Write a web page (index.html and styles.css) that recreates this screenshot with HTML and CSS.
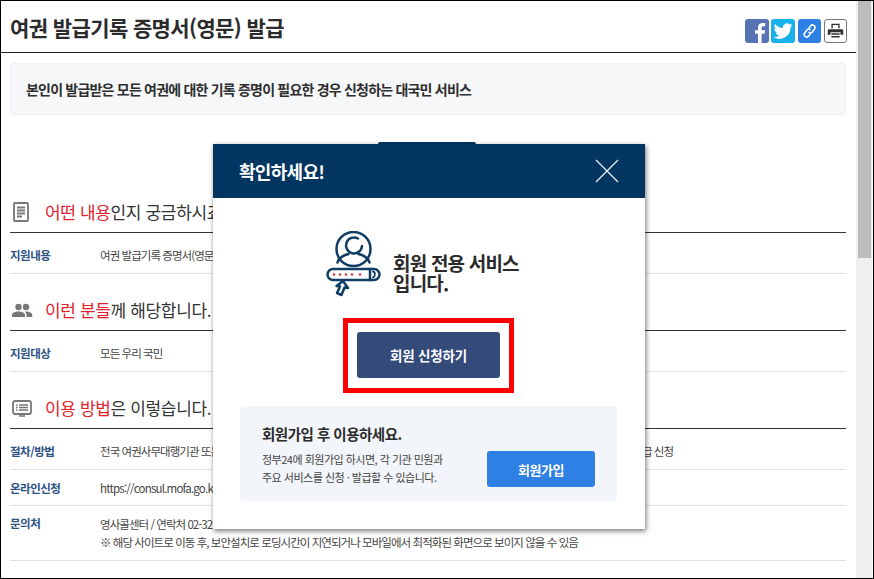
FILE: index.html
```html
<!DOCTYPE html>
<html lang="ko">
<head>
<meta charset="utf-8">
<title>여권 발급기록 증명서(영문) 발급</title>
<link rel="stylesheet" href="styles.css">
</head>
<body>
<div class="frame">
  <main class="page">
    <header class="top">
      <h1 class="title">여권 발급기록 증명서(영문) 발급</h1>
      <div class="share">
        <span class="sq fb"><svg viewBox="0 0 24 24" width="24" height="24"><path fill="#fff" d="M16.600 24v-9.200h3l.5-3.600h-3.500V9.100c0-1.100.4-1.800 1.900-1.800h1.700V4.100c-.6-.1-1.600-.2-2.700-.2-2.700 0-4.500 1.600-4.500 4.600v2.700h-3v3.600h3V24z"/></svg></span>
        <span class="sq tw"><svg viewBox="0 0 24 24" width="24" height="24"><path fill="#fff" d="M21.500 6.200c-.7.3-1.500.5-2.200.6.800-.5 1.400-1.200 1.700-2.100-.8.4-1.600.8-2.400.9a3.900 3.900 0 0 0-6.600 3.500C8.700 8.900 5.800 7.300 3.900 5c-1 1.800-.5 4 1.200 5.200-.6 0-1.200-.2-1.800-.5 0 1.900 1.400 3.500 3.200 3.900-.6.1-1.200.2-1.800.1.500 1.600 2 2.700 3.700 2.700A7.900 7.900 0 0 1 2.500 18a11 11 0 0 0 17-9.800c.8-.5 1.500-1.200 2-2z"/></svg></span>
        <span class="sq ln"><svg viewBox="0 0 23 24" width="23" height="24" fill="none" stroke="#fff" stroke-width="1.500" stroke-linecap="round"><path d="M10.800 9.400l1.500-2.200c1-1.300 2.600-1.500 3.700-.7s1.300 2.400.4 3.700l-1.900 2.600c-1 1.200-2.500 1.400-3.500.6"/><path d="M12.400 14.600l-1.500 2.200c-1 1.300-2.600 1.500-3.700.7s-1.300-2.400-.4-3.700l1.900-2.600c1-1.200 2.500-1.400 3.500-.6"/></svg></span>
        <span class="sq pr"><svg viewBox="0 0 23 24" width="21" height="22" fill="#2f2f2f"><path d="M7 4h9v5h-1.500V5.500h-6V9H7z"/><path d="M4.500 10h14a1.500 1.500 0 0 1 1.500 1.500V16h-3v-2.500H6V16H3v-4.500A1.500 1.500 0 0 1 4.500 10z"/><path d="M7 17.500h9v1.500H7zM7 14.500h9v1.500H7z"/></svg></span>
      </div>
    </header>

    <p class="notice">본인이 발급받은 모든 여권에 대한 기록 증명이 필요한 경우 신청하는 대국민 서비스</p>

    <section class="sec first">
      <h2 class="sec-head">
        <svg class="sec-icon" viewBox="0 -2 35 20" width="35" height="20" fill="none" stroke="#777" stroke-width="1.800"><rect x="4" y="-1" width="14" height="18" rx="1"/><path d="M7 3.500h8M7 6.500h8M7 9.500h8M7 12.500h5"/></svg>
        <span><em class="red">어떤 내용</em>인지 궁금하시죠?</span>
      </h2>
      <div class="row"><div class="lab">지원내용</div><div class="val">여권 발급기록 증명서(영문) 발급</div></div>
    </section>

    <section class="sec">
      <h2 class="sec-head">
        <svg class="sec-icon" viewBox="0 -1 35 20" width="35" height="20" fill="#777"><circle cx="8.500" cy="6" r="3.200"/><circle cx="16" cy="6" r="3.200"/><path d="M2 16v-2c0-2 3-3.500 6.500-3.500S15 12 15 14v2zM16.500 16v-2c0-1.300-.6-2.400-1.600-3.300.4-.1.800-.2 1.300-.2 3 0 6 1.500 6 3.500v2z"/></svg>
        <span><em class="red">이런 분들</em>께 해당합니다.</span>
      </h2>
      <div class="row"><div class="lab">지원대상</div><div class="val">모든 우리 국민</div></div>
    </section>

    <section class="sec">
      <h2 class="sec-head">
        <svg class="sec-icon" viewBox="0 -1 35 20" width="35" height="20" fill="none" stroke="#777" stroke-width="1.800"><rect x="3" y="2" width="18" height="13" rx="2"/><path d="M6 6h1.500M9 6h9M6 8.500h1.500M9 8.500h9M6 11h1.500M9 11h9" stroke-width="1.300"/><path d="M9 17h6" stroke-width="1.500"/></svg>
        <span><em class="red">이용 방법</em>은 이렇습니다.</span>
      </h2>
      <div class="row"><div class="lab">절차/방법</div><div class="val">전국 여권사무대행기관 또는 재외공관 방문 신청 또는 온라인 영사민원24를 통해 여권 발급기록 증명서(영문)온라인 또는 우편 발급 신청</div></div>
      <div class="row short"><div class="lab">온라인신청</div><div class="val url">https://consul.mofa.go.kr</div></div>
      <div class="row tall">
        <div class="lab">문의처</div>
        <div class="val">영사콜센터 / 연락처 02-3210-0404<br>※ 해당 사이트로 이동 후, 보안설치로 로딩시간이 지연되거나 모바일에서 최적화된 화면으로 보이지 않을 수 있음</div>
      </div>
    </section>
  </main>

  <div class="scrollbar"><div class="thumb"></div></div>

  <div class="tab-behind"></div>
  <div class="modal">
    <div class="modal-head">
      <span class="modal-title">확인하세요!</span>
      <svg class="close" viewBox="0 0 24 24" width="24" height="24" stroke="#e8eef3" stroke-width="1.300"><path d="M1 1l22 22M23 1L1 23"/></svg>
    </div>
    <div class="modal-body">
      <div class="intro">
        <svg class="member-icon" viewBox="0 0 56 66" width="56" height="66" fill="none" stroke="#0f3d63" stroke-width="2.500" stroke-linecap="round" stroke-linejoin="round">
          <circle cx="27.500" cy="18" r="17"/>
          <path d="M32 7.500a8 8 0 1 0 4 7.500"/>
          <path d="M22.500 23c-6 1.500-10 5-11 8.500M32.500 23c6 1.500 10 5 11 8.500"/>
          <rect x="1.500" y="38" width="52" height="11" rx="5.500"/>
          <path d="M44 38v11"/>
          <path d="M47 40.500c2.500.5 2.500 5 0 6" stroke-width="1.800"/>
          <path d="M17 50l5 7-3.500-.5-3 7.500-4.500-2 3-6.500-3.500-.5z" fill="#fff"/>
          <g fill="#d8384a" stroke="none"><circle cx="8" cy="43.500" r="1.300"/><circle cx="14" cy="43.500" r="1.300"/><circle cx="20" cy="43.500" r="1.300"/><circle cx="26" cy="43.500" r="1.300"/><circle cx="34" cy="43.500" r="1.300"/></g>
        </svg>
        <p class="intro-text">회원 전용 서비스<br>입니다.</p>
      </div>
      <div class="mark"><a class="apply">회원 신청하기</a></div>
      <div class="join">
        <div class="join-copy">
          <h3 class="join-title">회원가입 후 이용하세요.</h3>
          <p class="join-text">정부24에 회원가입 하시면, 각 기관 민원과<br>주요 서비스를 신청 · 발급할 수 있습니다.</p>
        </div>
        <a class="join-btn">회원가입</a>
      </div>
    </div>
  </div>
</div>
</body>
</html>
```

FILE: styles.css
```css
* { box-sizing: border-box; }
html, body { margin: 0; padding: 0; }
body {
  width: 874px;
  height: 579px;
  overflow: hidden;
  background: #fff;
  font-family: "Noto Sans CJK KR", "Noto Sans", sans-serif;
  color: #333;
}
.frame {
  position: relative;
  display: flex;
  width: 874px;
  height: 579px;
  border: 1px solid #000;
  overflow: hidden;
}
.page {
  flex: 1;
  min-width: 0;
  height: 577px;
  overflow: hidden;
}
.scrollbar {
  width: 16px;
  height: 577px;
  margin-right: 1px;
  background: #efefef;
}
.thumb {
  width: 13px;
  margin-left: 2px;
  height: 257px;
  background: #bdbdbd;
}
.top {
  display: flex;
  align-items: center;
  justify-content: space-between;
  height: 52px;
  padding: 0 9px 0 9px;
  border-bottom: 1px solid #222;
}
.title {
  margin: 1px 0 0;
  font-size: 21px;
  font-weight: 700;
  letter-spacing: -0.6px;
  color: #2b2b2b;
  line-height: 28px;
}
.share {
  display: flex;
  gap: 2px;
  margin-top: 9px;
}
.sq {
  display: block;
  width: 24px;
  height: 24px;
  border-radius: 3px;
  overflow: hidden;
}
.sq svg { display: block; }
.fb { background: #5673b3; }
.tw { background: #19b1e9; }
.ln { width: 23px; margin-left: 1px; background: #2f80e4; }
.pr {
  width: 23px;
  margin-left: 1px;
  background: #fff;
  border: 1px solid #777;
}
.notice {
  display: flex;
  align-items: center;
  height: 52px;
  margin: 10px 10px 0 9px;
  padding: 0 15px;
  background: #f6f7f9;
  border: 1px solid #eeeff2;
  border-radius: 4px;
  font-size: 14px;
  font-weight: 700;
  letter-spacing: -0.8px;
  color: #2e2e2e;
}
.sec { padding: 0 10px 0 9px; margin-top: 25px; }
.sec.first { margin-top: 86px; }
.sec-head {
  display: flex;
  align-items: center;
  height: 32px;
  margin: 0;
  border-bottom: 1px solid #333;
  padding: 0 0 10px 0;
  font-size: 17px;
  font-weight: 400;
  letter-spacing: -0.35px;
  color: #333;
  white-space: nowrap;
}
.sec-icon { display: block; flex: none; }
.red { font-style: normal; color: #e2212b; }
.row {
  display: flex;
  align-items: center;
  height: 41px;
  padding-top: 4px;
  border-bottom: 1px solid #e0e0e0;
  font-size: 11.500px;
}
.row.short { height: 36px; padding-top: 0; }
.row.tall { height: 55px; align-items: flex-start; padding-top: 9px; }
.lab {
  width: 90px;
  flex: none;
  font-weight: 700;
  letter-spacing: -0.5px;
  color: #2d5283;
}
.val { color: #444; line-height: 18px; white-space: nowrap; letter-spacing: -0.95px; }
.url { letter-spacing: -0.8px; }

.tab-behind {
  position: absolute;
  left: 377px;
  top: 141px;
  width: 98px;
  height: 6px;
  background: #02355f;
  border-radius: 2px 2px 0 0;
}
.modal {
  position: absolute;
  left: 212px;
  top: 143px;
  width: 432px;
  height: 385px;
  background: #fff;
  box-shadow: 1px 2px 5px rgba(0, 0, 0, 0.55);
}
.modal-head {
  display: flex;
  align-items: center;
  justify-content: space-between;
  height: 54px;
  padding: 0 26px 0 26px;
  background: #02355f;
}
.modal-title {
  font-size: 18px;
  font-weight: 700;
  letter-spacing: -0.7px;
  color: #fff;
}
.close { display: block; }
.modal-body { padding: 33px 28px 0 27px; }
.intro {
  display: flex;
  align-items: flex-start;
  gap: 11px;
  margin-left: 86px;
}
.member-icon { display: block; flex: none; }
.intro-text {
  margin: 22px 0 0;
  font-size: 19px;
  line-height: 20px;
  font-weight: 700;
  letter-spacing: -0.8px;
  color: #2b2b2b;
}
.mark {
  width: 171px;
  margin: 21px auto 0;
  padding: 9px 9px 10px 9px;
  border: 5px solid #f00;
}
.apply {
  display: flex;
  align-items: center;
  justify-content: center;
  height: 46px;
  background: #344a78;
  border-radius: 3px;
  font-size: 13.500px;
  font-weight: 700;
  letter-spacing: -0.2px;
  color: #fff;
}
.join {
  display: flex;
  align-items: flex-start;
  justify-content: space-between;
  height: 95px;
  margin-top: 13px;
  padding: 18px 22px 0 22px;
  background: #f2f5f9;
  border-radius: 4px;
}
.join-title {
  margin: 0;
  font-size: 14.500px;
  font-weight: 700;
  line-height: 20px;
  letter-spacing: -0.5px;
  color: #2b2b2b;
}
.join-text {
  margin: 6px 0 0;
  font-size: 11px;
  line-height: 18px;
  letter-spacing: -0.5px;
  color: #444;
}
.join-btn {
  display: flex;
  align-items: center;
  justify-content: center;
  width: 108px;
  height: 36px;
  margin-top: 27px;
  background: #2f80e4;
  border-radius: 3px;
  font-size: 13px;
  font-weight: 700;
  letter-spacing: -0.4px;
  color: #fff;
}
```
